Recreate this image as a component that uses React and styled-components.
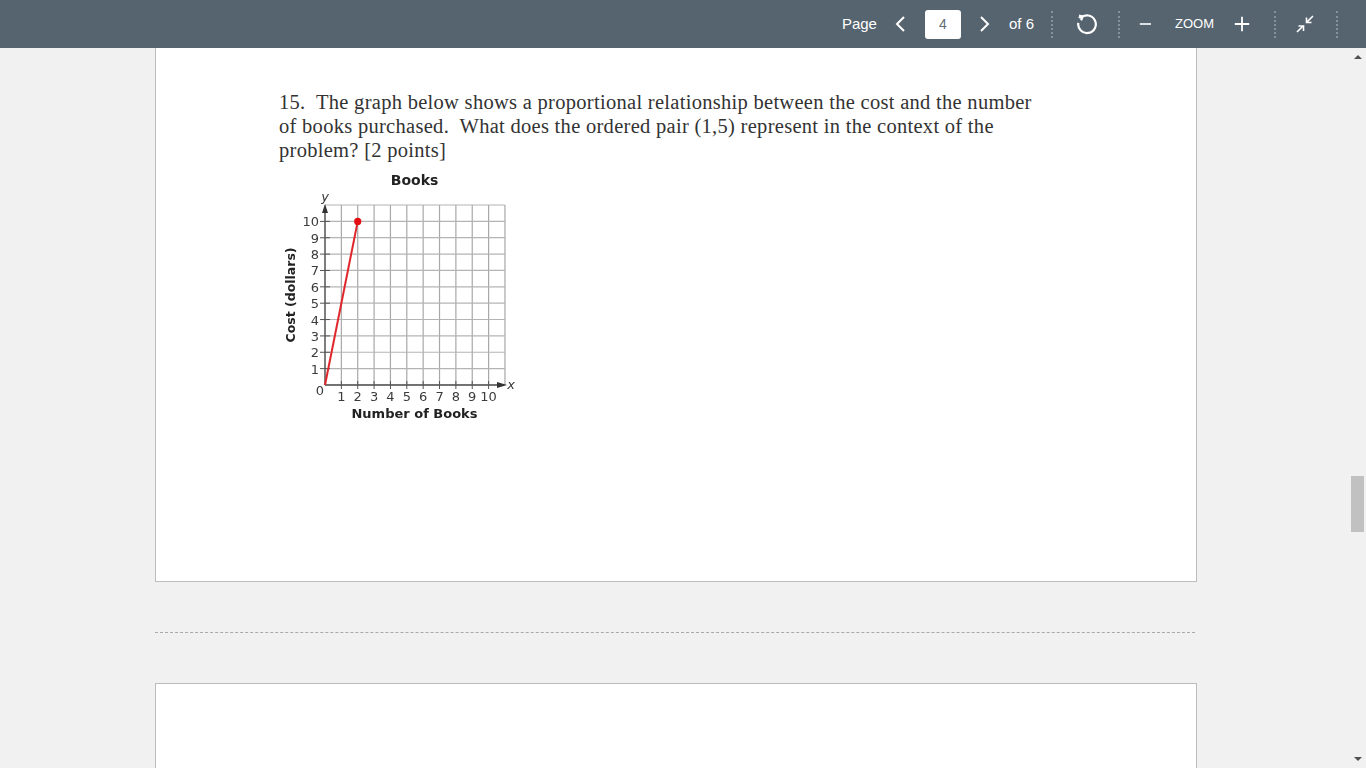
import React from "react";
import styled, { createGlobalStyle } from "styled-components";

const Global = createGlobalStyle`
  html, body { margin: 0; padding: 0; height: 100%; overflow: hidden; background: #f1f1f1; }
  #root { height: 100%; }
`;
const App_ = styled.div`
  display: flex; flex-direction: column; height: 768px; overflow: hidden;
  font-family: "Liberation Sans", Arial, sans-serif;
`;
const Toolbar = styled.header`
  flex: 0 0 48px; display: flex; align-items: center; justify-content: flex-end;
  background: #56646f; color: #fff; padding-right: 28px; box-sizing: border-box;
`;
const Label = styled.span`
  font-size: ${p => p.$size || 15}px; margin-left: ${p => p.$ml || 0}px; line-height: 48px; white-space: nowrap;
  letter-spacing: ${p => p.$ls || 0}px;
`;
const IconButton = styled.button`
  width: ${p => p.$w || 24}px; height: 32px; padding: 0; border: 0; background: none; color: #fff;
  display: flex; align-items: center; justify-content: center; margin-left: ${p => p.$ml || 0}px;
  svg { display: block; }
`;
const PageInput = styled.div`
  width: 36px; height: 29px; margin-left: ${p => p.$ml || 0}px; background: #fff; border-radius: 3px;
  color: #5f6b75; font-size: 14px; line-height: 29px; text-align: center;
`;
const Sep = styled.i`
  display: block; width: 0; height: 27px; margin-left: ${p => p.$ml || 0}px;
  border-left: 2px dotted #85919b;
`;
const Body = styled.div`
  flex: 1; min-height: 0; display: flex;
`;
const Viewer = styled.main`
  flex: 1; min-width: 0; padding-left: 155px; box-sizing: border-box; overflow: hidden;
`;
const Sheet = styled.section`
  width: 1042px; box-sizing: border-box; background: #fff; border: 1px solid #bdbdbd;
  ${p => p.$first ? "border-top: 0; height: 534px; padding: 42px 0 0 123px;" : "border-bottom: 0; height: 100px;"}
`;
const Question = styled.p`
  margin: 0; font-family: "Liberation Serif", "Times New Roman", serif; font-size: 20.5px; line-height: 24px; color: #333;
`;
const Line = styled.span`
  display: block; white-space: pre; letter-spacing: ${p => p.$ls}px;
`;
const Chart = styled.svg`
  display: block; margin-top: 8px; filter: blur(0.35px);
`;
const Divider = styled.hr`
  width: 1040px; margin: 50px 0 50px; border: 0; border-top: 1px dashed #a9a9a9; height: 0;
`;
const Scrollbar = styled.aside`
  flex: 0 0 17px; display: flex; flex-direction: column; align-items: center; background: #f1f1f1;
`;
const ArrowUp = styled.i`
  display: block; margin-top: 7px; width: 0; height: 0;
  border: 4px solid transparent; border-top: 0; border-bottom: 4px solid #505050;
`;
const Thumb = styled.div`
  width: 13px; height: 56px; margin-top: 417px; background: #c1c1c1;
`;
const ArrowDown = styled.i`
  display: block; margin-top: auto; margin-bottom: 7px; width: 0; height: 0;
  border: 4px solid transparent; border-bottom: 0; border-top: 4px solid #505050;
`;

const Ico = ({ children, s = 20, sw = 2 }) => (
  <svg width={s} height={s} viewBox="0 0 20 20" fill="none" stroke="currentColor" strokeWidth={sw}>{children}</svg>
);

const TX = [...Array(12)].map((_, i) => 46 + i * 16.36);
const TY = [...Array(12)].map((_, i) => 35 + i * 16.36);

const tick = { fontFamily: '"DejaVu Sans", sans-serif', fontSize: 13, fill: "#3c3c3c" };
const bold = { fontFamily: '"DejaVu Sans", sans-serif', fontSize: 13, fontWeight: 700, fill: "#222" };

function Graph() {
  const x = n => 46 + n * 16.36;
  const y = n => 215 - n * 16.36;
  return (
    <Chart width="245" height="255" viewBox="0 0 245 255">
      <text x="135.5" y="15" textAnchor="middle" style={{ ...bold, fontSize: 14 }}>Books</text>
      <text x="46" y="31" textAnchor="middle" style={{ ...tick, fontStyle: "italic", fontSize: 13 }}>y</text>
      {TX.map((v, i) => <line key={i} x1={v} x2={v} y1="35" y2="215" stroke="#a8a8a8" strokeWidth="1.2" />)}
      {TY.map((v, i) => <line key={i} x1="46" x2="226" y1={v} y2={v} stroke="#b4b4b4" strokeWidth="1.2" />)}
      <line x1="46" x2="46" y1="215" y2="40" stroke="#555" strokeWidth="1.3" />
      <line x1="46" x2="222" y1="215" y2="215" stroke="#555" strokeWidth="1.3" />
      <polygon points="46,34 43,43 49,43" fill="#333" />
      <polygon points="228,215 218,212 218,218" fill="#333" />
      {[1,2,3,4,5,6,7,8,9,10].map(n => (
        <g key={n}>
          <line x1="41" x2="51" y1={y(n)} y2={y(n)} stroke="#555" />
          <line x1={x(n)} x2={x(n)} y1="211" y2="219" stroke="#555" />
          <text x="40" y={y(n) + 5} textAnchor="end" style={tick}>{n}</text>
          <text x={x(n) - (n === 10 ? 0 : 0)} y="231" textAnchor="middle" style={tick}>{n}</text>
        </g>
      ))}
      <text x="41" y="225" textAnchor="middle" style={tick} dx="0" dy="0">0</text>
      <text x="232" y="219" textAnchor="middle" style={{ ...tick, fontStyle: "italic" }}>x</text>
      <text x="135.5" y="248" textAnchor="middle" style={bold}>Number of Books</text>
      <text transform="translate(16 125) rotate(-90)" textAnchor="middle" style={{ ...bold, fontSize: 12.5 }}>Cost (dollars)</text>
      <line x1={x(0)} y1={y(0)} x2={x(2)} y2={y(10)} stroke="#e0262a" strokeWidth="2" />
      <circle cx={x(2)} cy={y(10)} r="3.6" fill="#e30d12" />
    </Chart>
  );
}

export default function App() {
  return (
    <App_>
      <Global />
      <Toolbar>
        <Label>Page</Label>
        <IconButton $ml={12}><Ico><path d="M13 3 6 10l7 7" /></Ico></IconButton>
        <PageInput $ml={12}>4</PageInput>
        <IconButton $ml={11}><Ico><path d="M7 3l7 7-7 7" /></Ico></IconButton>
        <Label $ml={13}>of 6</Label>
        <Sep $ml={17} />
        <IconButton $ml={19} $w={28}>
          <Ico s={22} sw={2}><path d="M5.2 4.6A8 8 0 1 1 3 9" /><path d="M3.6 2.4 6.8 3.2 5.6 6.6 M3.4 3.6l3.4 1" /></Ico>
        </IconButton>
        <Sep $ml={18} />
        <IconButton $ml={15}><Ico s={16}><path d="M1 10h14" /></Ico></IconButton>
        <Label $ml={16} $size={13}>ZOOM</Label>
        <IconButton $ml={16}><Ico s={18}><path d="M10 2v16M2 10h16" /></Ico></IconButton>
        <Sep $ml={20} />
        <IconButton $ml={17}>
          <Ico s={20} sw={1.6}><path d="M18 2l-6 6M11.5 3.5v5h5" /><path d="M2 18l6-6M3.5 12h5v5" /></Ico>
        </IconButton>
        <Sep $ml={19} />
      </Toolbar>
      <Body>
        <Viewer>
          <Sheet $first>
            <Question>
              <Line $ls={0.29}>{"15.  The graph below shows a proportional relationship between the cost and the number"}</Line>
              <Line $ls={0.29}>{"of books purchased.  What does the ordered pair (1,5) represent in the context of the"}</Line>
              <Line $ls={0.29}>{"problem? [2 points]"}</Line>
            </Question>
            <Graph />
          </Sheet>
          <Divider />
          <Sheet />
        </Viewer>
        <Scrollbar>
          <ArrowUp />
          <Thumb />
          <ArrowDown />
        </Scrollbar>
      </Body>
    </App_>
  );
}
